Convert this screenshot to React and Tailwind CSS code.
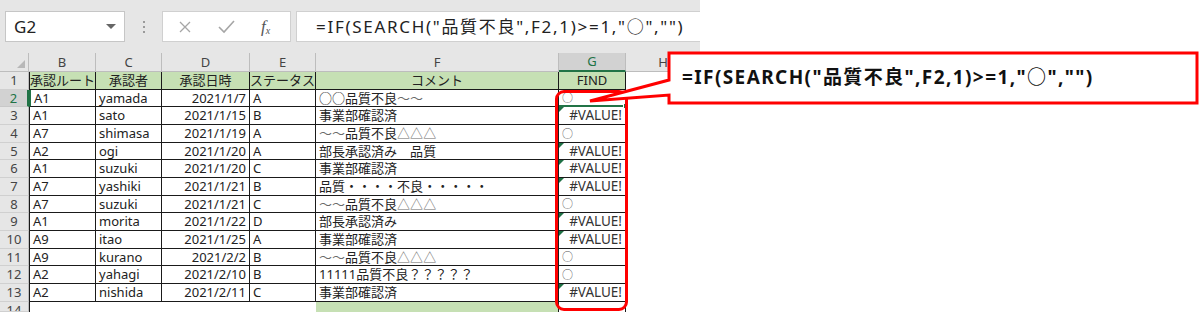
import React from "react";

const rows = [
  ["A1", "yamada", "2021/1/7", "A", "○○品質不良～～", "○"],
  ["A1", "sato", "2021/1/15", "B", "事業部確認済", "#VALUE!"],
  ["A7", "shimasa", "2021/1/19", "A", "～～品質不良△△△", "○"],
  ["A2", "ogi", "2021/1/20", "A", "部長承認済み　品質", "#VALUE!"],
  ["A1", "suzuki", "2021/1/20", "C", "事業部確認済", "#VALUE!"],
  ["A7", "yashiki", "2021/1/21", "B", "品質・・・・不良・・・・・", "#VALUE!"],
  ["A7", "suzuki", "2021/1/21", "C", "～～品質不良△△△", "○"],
  ["A1", "morita", "2021/1/22", "D", "部長承認済み", "#VALUE!"],
  ["A9", "itao", "2021/1/25", "A", "事業部確認済", "#VALUE!"],
  ["A9", "kurano", "2021/2/2", "B", "～～品質不良△△△", "○"],
  ["A2", "yahagi", "2021/2/10", "B", "11111品質不良？？？？？", "○"],
  ["A2", "nishida", "2021/2/11", "C", "事業部確認済", "#VALUE!"],
];

const heights = ["h-[18px]", "h-[17px]", "h-[18px]", "h-[18px]", "h-[17px]", "h-[18px]", "h-[18px]", "h-[17px]", "h-[18px]", "h-[18px]", "h-[17px]", "h-[18px]", "h-[18px]"];

const cell = "border-r border-b border-[#1a1a1a] px-[3px] flex items-center whitespace-nowrap overflow-hidden leading-[15px]";
const cellFont = { fontFamily: '"Noto Sans", "Noto Sans CJK JP", sans-serif' };

function Comment({ text }) {
  // ～ and △ come out lighter in the sheet
  return (
    <span>
      {[...text].map((ch, i) => (
        <span key={i} className={"～△".includes(ch) ? "text-[#6a6a6a]" : ""}>{ch}</span>
      ))}
    </span>
  );
}

function RowHeader({ n, h, selected, top }) {
  return (
    <div
      className={`${h} flex ${top ? "items-start pt-[1px]" : "items-center"} justify-center overflow-hidden text-[13px] leading-[15px] border-b border-r ${selected ? "bg-[#d2d2d2] text-[#217346] border-r-[#217346] border-r-2 border-b-[#c8c8c8]" : "bg-[#e6e6e6] text-[#444] border-b-[#d0d0d0] border-r-[#bdbdbd]"}`}
    >
      {n}
    </div>
  );
}

function Toolbar() {
  return (
    <div className="h-[54px] flex items-center pl-[5px] bg-[#e6e6e6]" style={{ fontFamily: '"Noto Sans", "Noto Sans CJK JP", sans-serif' }}>
      <div className="w-[120px] h-[31px] bg-white border border-[#c6c6c6] flex items-center justify-between pl-[8px] pr-[8px]">
        <span className="text-[17px] text-[#222]">G2</span>
        <span className="w-0 h-0 border-l-[5px] border-r-[5px] border-t-[5px] border-l-transparent border-r-transparent border-t-[#666]" />
      </div>
      <div className="w-[37px] flex flex-col items-center gap-[3px]">
        <span className="w-[2px] h-[2px] bg-[#9a9a9a]" />
        <span className="w-[2px] h-[2px] bg-[#9a9a9a]" />
        <span className="w-[2px] h-[2px] bg-[#9a9a9a]" />
      </div>
      <div className="w-[129px] h-[31px] bg-white border border-[#d0d0d0] flex items-center">
        <svg width="46" height="14" viewBox="0 0 46 14" className="shrink-0">
          <path d="M17 2 L27 12 M27 2 L17 12" stroke="#a6a6a6" strokeWidth="1.3" fill="none" />
        </svg>
        <svg width="38" height="14" viewBox="0 0 38 14" className="shrink-0">
          <path d="M10 7 L15 12 L25 1" stroke="#a6a6a6" strokeWidth="1.6" fill="none" />
        </svg>
        <span className="ml-[14px] text-[#555] italic text-[17px] leading-none" style={{ fontFamily: '"Liberation Serif", serif' }}>
          f<span className="text-[10px] align-[-2px]">x</span>
        </span>
      </div>
      <div className="ml-[5px] flex-1 h-[31px] bg-white border border-[#d0d0d0] border-r-0 flex items-center pl-[19px]">
        <span className="text-[17px] text-[#222] whitespace-nowrap tracking-[1.7px]">=IF(SEARCH("品質不良",F2,1)&gt;=1,"○","")</span>
      </div>
    </div>
  );
}

function ColHeaders() {
  const cols = ["B", "C", "D", "E", "F", "G", "H"];
  return (
    <>
      <div className="h-[19px] bg-[#e6e6e6] border-b border-r border-[#bdbdbd] flex items-end justify-end pr-[3px] pb-[3px]">
        <svg width="8" height="8" viewBox="0 0 8 8">
          <path d="M8 0 L8 8 L0 8 Z" fill="#b8b8b8" />
        </svg>
      </div>
      {cols.map((c) => (
        <div
          key={c}
          className={`h-[19px] flex items-center justify-center text-[13px] leading-[15px] border-r ${c === "G" ? "bg-[#d2d2d2] text-[#217346] border-b-2 border-b-[#217346] border-r-[#bdbdbd]" : "bg-[#e6e6e6] text-[#444] border-b border-[#bdbdbd]"} ${c === "H" ? "border-r-0" : ""}`}
        >
          {c}
        </div>
      ))}
    </>
  );
}

function Sheet() {
  const headers = ["承認ルート", "承認者", "承認日時", "ステータス", "コメント", "FIND"];
  return (
    <div className="grid grid-cols-[29px_67px_66px_88px_66px_243px_67px_74px] bg-white text-[13px] text-[#222]" style={cellFont}>
      <ColHeaders />
      {/* row 1 */}
      <RowHeader n={1} h="h-[18px]" />
      {headers.map((t, i) => (
        <div key={t} className={`${cell} h-[18px] bg-[#c6e0b4] justify-center ${i === 0 ? "border-l" : ""}`}>
          {t}
        </div>
      ))}
      <div className="h-[18px] bg-white" />
      {rows.map((r, idx) => {
        const h = heights[idx + 1];
        const isErr = r[5] === "#VALUE!";
        return (
          <React.Fragment key={idx}>
            <RowHeader n={idx + 2} h={h} selected={idx === 0} />
            <div className={`${cell} ${h} ${idx === 0 ? "border-l-2 border-l-[#217346]" : "border-l"}`}>{r[0]}</div>
            <div className={`${cell} ${h}`}>{r[1]}</div>
            <div className={`${cell} ${h} justify-end`}>{r[2]}</div>
            <div className={`${cell} ${h}`}>{r[3]}</div>
            <div className={`${cell} ${h}`}><Comment text={r[4]} /></div>
            <div className={`${cell} ${h} relative overflow-visible ${isErr ? "justify-end pr-[3px]" : ""} ${idx === 0 ? "border-b-2 border-b-[#217346]" : ""}`}>
              {isErr && <span className="absolute left-0 top-0 w-0 h-0 border-t-[5px] border-r-[5px] border-t-[#1e7145] border-r-transparent" />}
              <span className={isErr ? "text-[#333] text-[13.5px]" : "text-[#555] text-[11px] leading-[12px]"}>{r[5]}</span>
              {idx === 0 && <span className="absolute right-[-4px] bottom-[-4px] w-[6px] h-[6px] bg-[#217346] border border-white" />}
            </div>
            <div className={`${h} bg-white`} />
          </React.Fragment>
        );
      })}
      {/* row 14, cut off at the bottom */}
      <RowHeader n={14} h="h-[10px]" top />
      <div className="h-[10px] border-l border-[#1a1a1a]" />
      <div className="h-[10px]" />
      <div className="h-[10px]" />
      <div className="h-[10px]" />
      <div className="h-[10px] bg-[#c6e0b4] border-r border-[#1a1a1a]" />
      <div className="h-[10px] border-r border-[#1a1a1a]" />
      <div className="h-[10px]" />
    </div>
  );
}

export default function App() {
  return (
    <div className="relative w-[1200px] h-[312px] overflow-hidden bg-white flex">
      <div className="w-[700px] flex flex-col">
        <Toolbar />
        <Sheet />
      </div>

      {/* red rounded frame around column G */}
      <div className="absolute left-[555px] top-[90px] w-[73px] h-[221px] border-[3px] border-[#ff0000] rounded-[9px]" />

      {/* callout */}
      <svg className="absolute left-0 top-0" width="1200" height="312" viewBox="0 0 1200 312">
        <path
          d="M669 53 L1197 53 L1197 103 L669 103 L669 95 L590 101 L669 80 Z"
          fill="white"
          stroke="#ff0000"
          strokeWidth="3"
          strokeLinejoin="miter"
        />
      </svg>
      <div
        className="absolute left-[682px] top-[64px] text-[19px] font-bold text-[#111] whitespace-nowrap leading-[26px] tracking-[1.4px]"
        style={{ fontFamily: '"Noto Sans", "Noto Sans CJK JP", sans-serif' }}
      >
        =IF(SEARCH("品質不良",F2,1)&gt;=1,"○","")
      </div>
    </div>
  );
}
